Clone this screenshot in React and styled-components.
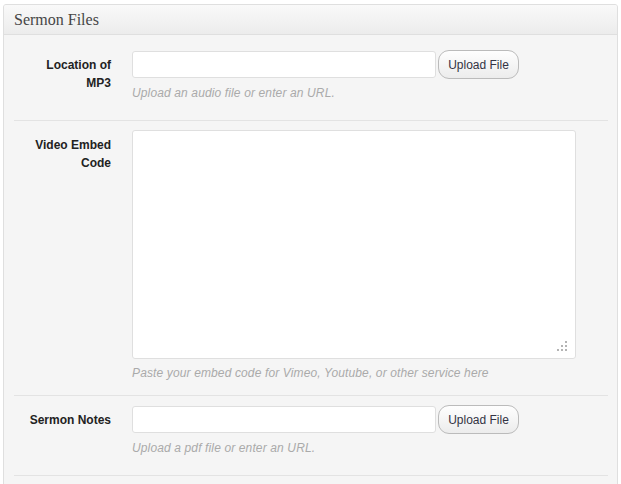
import React from "react";
import styled, { createGlobalStyle } from "styled-components";

const GlobalStyle = createGlobalStyle`
  html, body {
    margin: 0;
    padding: 0;
    background: #ffffff;
  }
  body {
    font-family: "Liberation Sans", Arial, sans-serif;
    font-size: 12px;
    color: #333;
  }
`;

const fields = [
  {
    label: "Location of MP3",
    kind: "upload",
    help: "Upload an audio file or enter an URL.",
  },
  {
    label: "Video Embed Code",
    kind: "textarea",
    help: "Paste your embed code for Vimeo, Youtube, or other service here",
  },
  {
    label: "Sermon Notes",
    kind: "upload",
    help: "Upload a pdf file or enter an URL.",
  },
];

function ResizeGrip() {
  const dots = [
    [8, 0],
    [4, 4],
    [8, 4],
    [0, 8],
    [4, 8],
    [8, 8],
  ];
  return (
    <Grip width="10" height="10" viewBox="0 0 10 10">
      {dots.map(([x, y]) => (
        <rect key={`${x}-${y}`} x={x} y={y} width="2" height="2" fill="#b4b4b4" />
      ))}
    </Grip>
  );
}

function Field({ field }) {
  return (
    <Row $loose={field.kind !== "textarea"}>
      <Label>{field.label}</Label>
      <Control>
        {field.kind === "upload" ? (
          <UploadLine>
            <TextInput type="text" />
            <Button type="button">Upload File</Button>
          </UploadLine>
        ) : (
          <AreaWrap>
            <TextArea />
            <ResizeGrip />
          </AreaWrap>
        )}
        <Help>{field.help}</Help>
      </Control>
    </Row>
  );
}

export default function App() {
  return (
    <>
      <GlobalStyle />
      <Panel>
        <PanelHeader>Sermon Files</PanelHeader>
        <PanelBody>
          {fields.map((f) => (
            <Field key={f.label} field={f} />
          ))}
        </PanelBody>
      </Panel>
    </>
  );
}

const Panel = styled.div`
  margin: 4px 0 0 3px;
  width: 615px;
  border: 1px solid #dfdfdf;
  border-radius: 3px;
  background: #f5f5f5;
  box-sizing: border-box;
  overflow: hidden;
`;

const PanelHeader = styled.h3`
  margin: 0;
  height: 29px;
  line-height: 29px;
  padding: 0 10px;
  font-family: Georgia, "Liberation Serif", "Times New Roman", serif;
  font-size: 16px;
  font-weight: normal;
  color: #464646;
  background: linear-gradient(to bottom, #f9f9f9, #ececec);
  border-bottom: 1px solid #dfdfdf;
`;

const PanelBody = styled.div`
  padding: 6px 9px 20px 10px;
`;

const Row = styled.div`
  display: grid;
  grid-template-columns: 118px 1fr;
  padding: 9px 0 ${(p) => (p.$loose ? "19px" : "14px")};
  border-bottom: 1px solid #e3e3e3;
`;

const Label = styled.label`
  padding: 6px 21px 0 12px;
  text-align: right;
  font-weight: bold;
  font-size: 12px;
  line-height: 18px;
  color: #222;
`;

const Control = styled.div`
  display: flex;
  flex-direction: column;
  align-items: flex-start;
`;

const UploadLine = styled.div`
  display: flex;
  align-items: center;
  gap: 2px;
`;

const TextInput = styled.input`
  box-sizing: border-box;
  width: 304px;
  height: 27px;
  margin: 0;
  padding: 3px 5px;
  border: 1px solid #dfdfdf;
  border-radius: 3px;
  background: #fff;
  font-family: inherit;
  font-size: 12px;
  outline: none;
`;

const Button = styled.button`
  box-sizing: border-box;
  width: 81px;
  height: 29px;
  margin: 0;
  padding: 0 8px;
  border: 1px solid #bbbbbb;
  border-radius: 11px;
  background: linear-gradient(to bottom, #fefefe, #ececec);
  font-family: "Liberation Sans", Arial, sans-serif;
  font-size: 12px;
  color: #333344;
  cursor: pointer;
`;

const AreaWrap = styled.div`
  position: relative;
  width: 444px;
  height: 229px;
`;

const TextArea = styled.textarea`
  box-sizing: border-box;
  display: block;
  width: 100%;
  height: 100%;
  margin: 0;
  border: 1px solid #dfdfdf;
  border-radius: 3px;
  background: #fff;
  resize: none;
  outline: none;
  font-family: inherit;
`;

const Grip = styled.svg`
  position: absolute;
  right: 9px;
  bottom: 8px;
`;

const Help = styled.span`
  margin-top: 6px;
  font-size: 12px;
  line-height: 16px;
  letter-spacing: 0.13px;
  font-style: italic;
  color: #aaaaaa;
`;
